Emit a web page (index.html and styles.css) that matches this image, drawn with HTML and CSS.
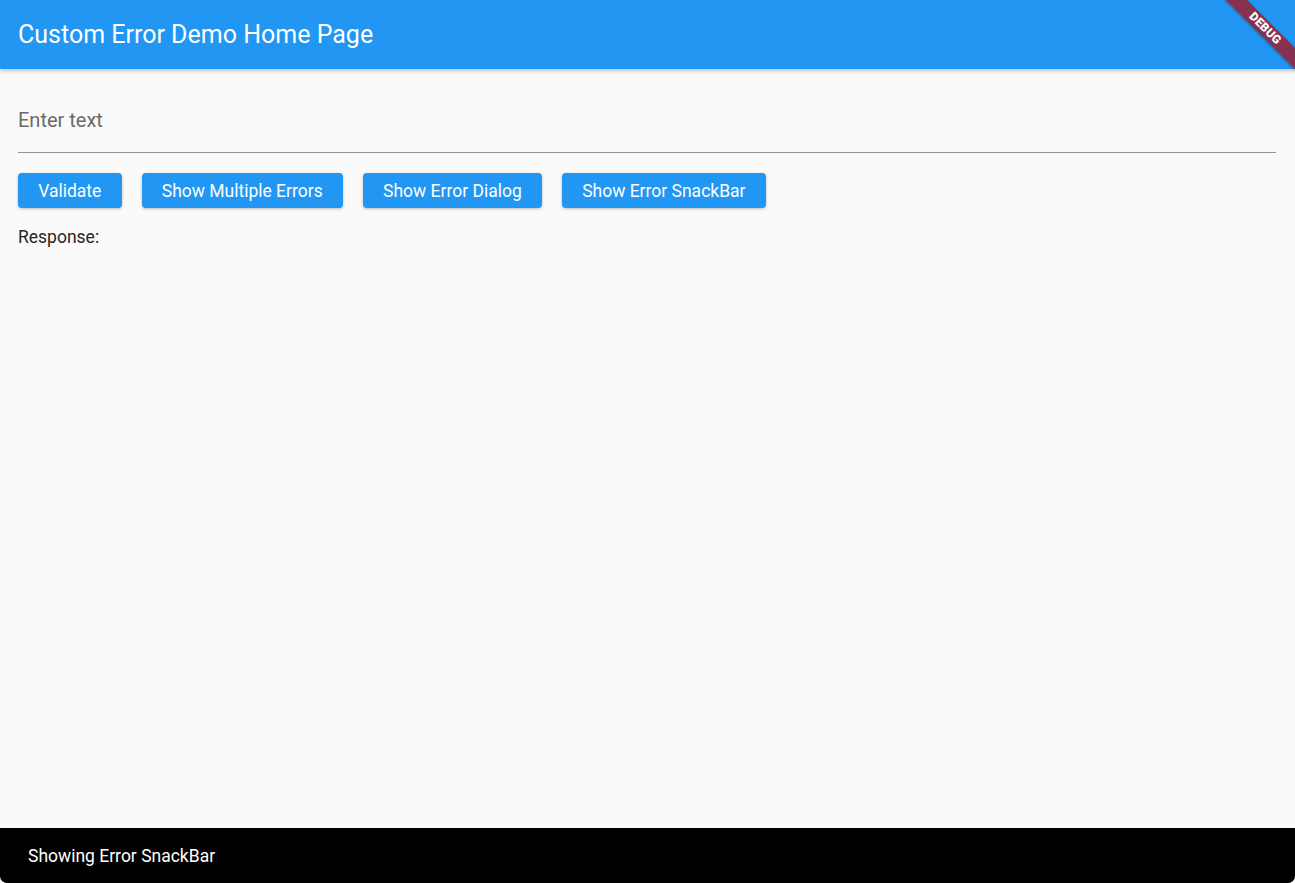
FILE: index.html
```html
<!DOCTYPE html>
<html lang="en">
<head>
    <meta charset="UTF-8">
    <title>Custom Error Demo Home Page</title>
    <link rel="stylesheet" href="styles.css">
</head>
<body>
    <header class="app-bar">
        <h1>Custom Error Demo Home Page</h1>
        <div class="debug-banner">
            <div class="debug-band">DEBUG</div>
        </div>
    </header>
    <main class="content">
        <div class="field">
            <input type="text" placeholder="Enter text">
        </div>
        <div class="actions">
            <button>Validate</button>
            <button>Show Multiple Errors</button>
            <button>Show Error Dialog</button>
            <button>Show Error SnackBar</button>
        </div>
        <p class="response">Response:</p>
    </main>
    <div class="snackbar">Showing Error SnackBar</div>
</body>
</html>
```

FILE: styles.css
```css
html, body {
    height: 100%;
}
body {
    margin: 0;
    font-family: Roboto, "Liberation Sans", sans-serif;
    background: #fafafa;
    color: #222;
    display: flex;
    flex-direction: column;
    overflow: hidden;
}
.app-bar {
    position: relative;
    height: 69px;
    flex-shrink: 0;
    background: #2196f3;
    color: #fff;
    display: flex;
    align-items: center;
    padding: 0 18px;
    box-shadow: 0 2px 4px rgba(0, 0, 0, 0.22);
    z-index: 1;
}
.app-bar h1 {
    margin: 0;
    font-size: 25px;
    font-weight: 400;
    padding-bottom: 1px;
}
.debug-banner {
    position: absolute;
    top: 0;
    right: 0;
    width: 80px;
    height: 80px;
    overflow: hidden;
}
.debug-band {
    position: absolute;
    left: -10px;
    top: 20.5px;
    width: 120px;
    height: 15px;
    line-height: 15px;
    background: #873050;
    color: #fff;
    font-size: 12px;
    font-weight: 900;
    letter-spacing: 0.2px;
    text-align: center;
    transform: rotate(45deg);
    box-shadow: 0 1px 3px rgba(0, 0, 0, 0.3);
}
.content {
    flex: 1;
    padding: 0 19px 0 18px;
}
.field input {
    display: block;
    width: 100%;
    box-sizing: border-box;
    margin-top: 18px;
    height: 66px;
    padding: 0;
    border: none;
    border-bottom: 1px solid #959595;
    background: transparent;
    font-family: inherit;
    font-size: 20px;
    color: #222;
    outline: none;
}
.field input::placeholder {
    color: #6a6a6a;
}
.actions {
    display: flex;
    gap: 20px;
    margin-top: 20px;
}
.actions button {
    height: 35px;
    padding: 0 20.2px;
    border: none;
    border-radius: 4px;
    background: #2196f3;
    color: #fff;
    font-family: inherit;
    font-size: 17.5px;
    font-weight: 400;
    box-shadow: 0 1px 3px rgba(0, 0, 0, 0.25);
    cursor: pointer;
}
.response {
    margin: 19px 0 0;
    font-size: 17.5px;
    line-height: 20px;
    color: #262626;
}
.snackbar {
    height: 55px;
    flex-shrink: 0;
    background: #000;
    color: #fff;
    font-size: 17.5px;
    display: flex;
    align-items: center;
    padding: 0 28px;
    border-radius: 0 0 7px 7px;
}
```
